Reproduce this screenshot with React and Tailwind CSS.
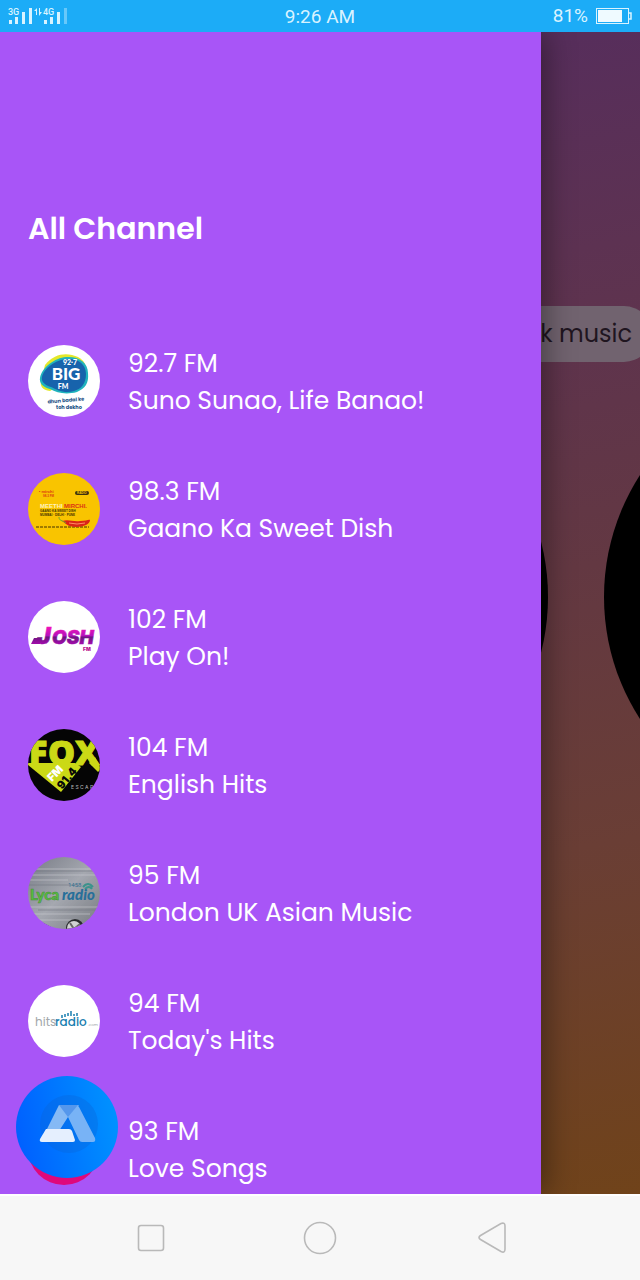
import React from "react";

const logoClass = "size-[72px] shrink-0 rounded-full";

function BigLogo() {
  return (
    <svg viewBox="0 0 72 72" className={logoClass} aria-hidden="true">
      <rect width="72" height="72" fill="#fff" />
      <path d="M17 20C25 10 35 8 44 10C53 12 58 17 58 24L22 46C14 45 12 41 13 36Z" fill="#e3e829" />
      <path d="M12 33C14 22 27 13 38 12C50 11 60 17 60 28C61 39 57 43 49 47C38 50 29 48 22 44C15 42 11 38 12 33Z" fill="#20b3bd" />
      <path d="M14 32C16 23 28 15 38 14C50 13 58 19 58 29C58 39 53 44 46 46C37 49 29 45 23 42C16 40 13 36 14 32Z" fill="#1763ac" />
      <g fill="#fff" fontFamily="Lato, sans-serif" fontWeight="900" textAnchor="middle">
        <text x="42" y="20" fontSize="7">92·7</text>
        <text x="38" y="35" fontSize="17">BIG</text>
        <text x="35" y="44" fontSize="7">FM</text>
      </g>
      <g fill="#184e84" fontFamily="Poppins, Lato, sans-serif" fontWeight="700" fontSize="5" textAnchor="middle">
        <text x="38" y="57" transform="rotate(-5 38 57)">dhun badal ke</text>
        <text x="41" y="64">toh dekho</text>
      </g>
    </svg>
  );
}

function MirchiLogo() {
  return (
    <svg viewBox="0 0 72 72" className={logoClass} aria-hidden="true">
      <rect width="72" height="72" fill="#f9c400" />
      <g fontFamily="'Liberation Sans', sans-serif" fontWeight="700">
        <text x="11" y="20" fontSize="4" fill="#dc3a12">▪ mirchi</text>
        <text x="15" y="24" fontSize="3" fill="#dc3a12">98.3 FM</text>
        <rect x="47" y="18" width="14" height="4" rx="2" fill="#3d3010" />
        <text x="49" y="21" fontSize="3" fill="#f9c400">RADIO</text>
        <text x="12" y="35" fontSize="6" fill="#fff2bd">MEETHI</text>
        <text x="36" y="35" fontSize="6" fill="#db3114">MIRCHI.</text>
        <text x="12" y="39" fontSize="3" fill="#443300">GAANO KA SWEET DISH</text>
        <text x="12" y="43" fontSize="3" fill="#443300">MUMBAI · DELHI · PUNE</text>
      </g>
      <path d="M8 54H61" stroke="#443300" strokeDasharray="3 1" />
      <path d="M34 48C41 46 45 49 52 48C58 48 61 46 62 47C62 51 56 54 48 54C40 54 37 50 34 48Z" fill="#d92418" />
      <path d="M31 44C31 48 34 47 38 50" fill="none" stroke="#71a82c" />
      <path d="M41 50Q49 52 57 50" fill="none" stroke="#ff8c63" />
    </svg>
  );
}

function JoshLogo() {
  return (
    <svg viewBox="0 0 72 72" className={logoClass} aria-hidden="true">
      <defs>
        <linearGradient id="josh" gradientUnits="userSpaceOnUse" x1="0" y1="26" x2="0" y2="44">
          <stop stopColor="#f112b8" />
          <stop offset="0.5" stopColor="#b212bc" />
          <stop offset="0.55" stopColor="#6c147f" />
          <stop offset="1" stopColor="#a90ab1" />
        </linearGradient>
      </defs>
      <rect width="72" height="72" fill="#fff" />
      <path d="M6 37H12L12 43H3Z" fill="url(#josh)" />
      <g fill="url(#josh)" stroke="url(#josh)" strokeWidth="0.5" fontFamily="Inter, sans-serif" fontWeight="900" fontStyle="italic">
        <text x="9" y="43" fontSize="23">J</text>
        <text x="24" y="43" fontSize="19">OSH</text>
      </g>
      <text x="55" y="50" fontFamily="Inter, sans-serif" fontSize="5" fontWeight="900" fill="#b8128f">FM</text>
    </svg>
  );
}

function FoxLogo() {
  return (
    <svg viewBox="0 0 72 72" className={logoClass} aria-hidden="true">
      <rect width="72" height="72" fill="#050505" />
      <path d="M0 36L33 63L53 38L47 34H0Z" fill="#cbd916" />
      <g fontFamily="'Open Sans', sans-serif" fontWeight="800" fontSize="34" fill="#cbd916" stroke="#cbd916" strokeWidth="1">
        <text x="1" y="36">F</text>
        <text x="20" y="36">O</text>
        <text x="47" y="36">X</text>
      </g>
      <path d="M61 34L67 28L73 40L70 43Z" fill="#cbd916" />
      <g fontFamily="Inter, sans-serif" fontWeight="900">
        <text x="24" y="53" fontSize="11" fill="#fff" transform="rotate(-46 24 53)">FM</text>
        <text x="34" y="61" fontSize="11" fill="#080808" transform="rotate(-50 34 61)">91.4</text>
      </g>
      <text x="43" y="60" fontSize="5" fill="#bbb" fontFamily="Inter, sans-serif">E S C A P E</text>
    </svg>
  );
}

function LycaLogo() {
  return (
    <svg viewBox="0 0 72 72" className={logoClass} aria-hidden="true">
      <defs>
        <linearGradient id="metal" x1="0" y1="0" x2="1" y2="1">
          <stop stopColor="#777b85" />
          <stop offset="0.5" stopColor="#a5a8b0" />
          <stop offset="1" stopColor="#777a80" />
        </linearGradient>
      </defs>
      <rect width="72" height="72" fill="url(#metal)" />
      <path d="M0 12H66M0 18H72M0 23H40M0 50H72M0 57H62M5 63H48" stroke="#c9cad0" strokeWidth="1" opacity="0.6" />
      <path d="M0 14H72M0 28H50M10 53H72" stroke="#737780" strokeWidth="1" opacity="0.6" />
      <text x="40" y="30" fontSize="6" fill="#327293" fontFamily="Roboto, sans-serif">1458</text>
      <path d="M55 30Q60 24 65 30M57 32Q61 28 64 32" fill="none" stroke="#3a938c" strokeWidth="2" />
      <g fontSize="15" fontWeight="900" fontFamily="Lato, sans-serif">
        <text x="2" y="43" fill="#58bd40" stroke="#438f36" strokeWidth="0.5">Lyca</text>
        <text x="34" y="43" fill="#276f9a" fontStyle="italic">radio</text>
      </g>
      <circle cx="47" cy="71" r="9" fill="#292b2d" />
      <circle cx="46" cy="71" r="7" fill="#d1d2d2" />
      <path d="M46 72L42 66M46 72L52 67" stroke="#676767" strokeWidth="2" />
      <path d="M10 63L23 70H18Z" fill="#2c3035" />
    </svg>
  );
}

function HitsLogo() {
  return (
    <svg viewBox="0 0 72 72" className={logoClass} aria-hidden="true">
      <rect width="72" height="72" fill="#fff" />
      <g fontFamily="Poppins, Lato, sans-serif">
        <text x="7" y="41" fontSize="12" fill="#a3a8aa">hits</text>
        <text x="27" y="41" fontSize="12" fontWeight="500" fill="#187eaf">radio</text>
        <text x="60" y="41" fontSize="4" fill="#9ba3a7">.com</text>
      </g>
      <path d="M34 33V30M37 32V29M40 31V28M43 31V26M46 31V29M49 31V28" stroke="#187eaf" strokeWidth="1.5" />
    </svg>
  );
}

function LoveLogo() {
  return (
    <svg viewBox="0 0 72 72" className={logoClass} aria-hidden="true">
      <rect width="72" height="72" fill="#df087b" />
    </svg>
  );
}

const channels = [
  { station: "92.7 FM", name: "Suno Sunao, Life Banao!", Logo: BigLogo },
  { station: "98.3 FM", name: "Gaano Ka Sweet Dish", Logo: MirchiLogo },
  { station: "102 FM", name: "Play On!", Logo: JoshLogo },
  { station: "104 FM", name: "English Hits", Logo: FoxLogo },
  { station: "95 FM", name: "London UK Asian Music", Logo: LycaLogo },
  { station: "94 FM", name: "Today's Hits", Logo: HitsLogo },
  { station: "93 FM", name: "Love Songs", Logo: LoveLogo },
];

function Signal({ weak }) {
  return (
    <svg viewBox="0 0 24 16" className="h-4 w-6" fill="#d9f3ff" aria-hidden="true">
      <rect x="1" y="12" width="3" height="4" />
      <rect x="7" y="9" width="3" height="7" />
      <rect x="14" y="4" width="3" height="12" />
      <rect x="21" y="0" width="3" height="16" opacity={weak ? 0.4 : 1} />
    </svg>
  );
}

function StatusBar() {
  return (
    <header className="grid h-8 shrink-0 grid-cols-3 items-center bg-[#1cacf7] px-2 font-['Roboto',sans-serif] text-[#d9f3ff]">
      <div className="flex items-end">
        <div className="relative">
          <Signal />
          <span className="absolute top-0 left-0 text-[9px] leading-[9px] font-medium">3G</span>
        </div>
        <svg viewBox="0 0 8 8" className="mr-px ml-0.5 size-2 self-start" fill="#d9f3ff" aria-hidden="true">
          <path d="M2 7V3H0L3 0V7ZM5 0H6V4H8L5 8Z" />
        </svg>
        <div className="relative">
          <Signal weak />
          <span className="absolute top-0 left-0 text-[9px] leading-[9px] font-medium">4G</span>
        </div>
      </div>
      <span className="pt-0.5 text-center text-[19px] leading-6 whitespace-nowrap">9:26 AM</span>
      <div className="flex items-center justify-end gap-2 text-[19px] leading-6">
        <span>81%</span>
        <svg viewBox="0 0 36 16" className="h-4 w-9" fill="none" stroke="#d9f3ff" aria-hidden="true">
          <rect x="0.5" y="0.5" width="32" height="15" />
          <rect x="2" y="2" width="24" height="12" fill="#effaff" stroke="none" />
          <path d="M33 5H35V11H33" strokeWidth="1.5" />
        </svg>
      </div>
    </header>
  );
}

function Player() {
  return (
    <div className="absolute inset-0 overflow-hidden bg-linear-[170deg,#542c60_0%,#5d3252_25%,#633842_50%,#6a3e35_72%,#70431a_100%]">
      <div className="-mr-3 flex justify-end pt-[274px]">
        <button type="button" className="h-14 rounded-full bg-[#71636f] px-5 text-[24px] leading-[54px] whitespace-nowrap text-[#20151f]">
          Rock music
        </button>
      </div>
      <div className="flex gap-14 pt-[10px] pl-[98px]">
        <div className="size-[450px] shrink-0 rounded-full bg-black" />
        <div className="size-[450px] shrink-0 rounded-full bg-black" />
      </div>
    </div>
  );
}

function Drawer() {
  return (
    <aside className="relative h-full w-[84.5%] overflow-y-auto bg-[#a855f7] text-white shadow-[4px_0_28px_rgba(0,0,0,0.4)] [scrollbar-width:none]">
      <h1 className="px-7 pt-[173px] pb-16 text-[30px] leading-12 font-semibold">All Channel</h1>
      <ul>
        {channels.map(({ station, name, Logo }) => (
          <li key={station}>
            <button type="button" className="flex h-32 w-full items-center gap-7 px-7 text-left text-[25px] leading-[37px]">
              <Logo />
              <span className="flex flex-col pt-0.5">
                <span>{station}</span>
                <span className="whitespace-nowrap">{name}</span>
              </span>
            </button>
          </li>
        ))}
      </ul>
    </aside>
  );
}

function FloatingButton() {
  return (
    <button type="button" aria-label="Assistant" className="absolute bottom-4 left-4 size-[102px] rounded-full">
      <svg viewBox="0 0 102 102" className="size-full" aria-hidden="true">
        <defs>
          <linearGradient id="assist" x1="0" y1="0.6" x2="1" y2="0.4">
            <stop stopColor="#0060ff" />
            <stop offset="1" stopColor="#0092ff" />
          </linearGradient>
        </defs>
        <circle cx="51" cy="51" r="51" fill="url(#assist)" />
        <circle cx="53" cy="48" r="29" fill="#0864d8" opacity="0.35" />
        <path d="M43 29H63L52 41L43 55H30Z" fill="#85b9f5" />
        <path d="M43 29H60Q62 29 63 31L79 62Q80 66 77 66H66Q64 66 63 64L52 41Z" fill="#78b3f6" />
        <path d="M43 29H62L52 41Z" fill="#5597ec" />
        <path d="M30 53H53Q55 53 56 55L59 64Q59 66 57 66H26Q23 66 24 63Z" fill="#e5effe" />
      </svg>
    </button>
  );
}

function NavigationBar() {
  const button = "flex size-12 items-center justify-center";
  return (
    <nav className="grid h-[86px] shrink-0 grid-cols-3 place-items-center border-t-2 border-white bg-[#f7f7f7] px-[66px]">
      <button type="button" aria-label="Recent apps" className={button}>
        <svg viewBox="0 0 34 34" className="size-[34px]" fill="none" stroke="#b9b9b9" strokeWidth="1.6" aria-hidden="true">
          <rect x="4.5" y="4.5" width="25" height="25" rx="2.5" />
        </svg>
      </button>
      <button type="button" aria-label="Home" className={button}>
        <svg viewBox="0 0 34 34" className="size-[34px]" fill="none" stroke="#b9b9b9" strokeWidth="1.6" aria-hidden="true">
          <circle cx="17" cy="17" r="15.5" />
        </svg>
      </button>
      <button type="button" aria-label="Back" className={button}>
        <svg viewBox="0 0 34 34" className="size-[34px]" fill="none" stroke="#b9b9b9" strokeWidth="1.6" aria-hidden="true">
          <path d="M8.5 14.5L29 2.5Q33 1 33 5V28Q33 32.5 29 30.5L8.5 18.5Q5.5 16.5 8.5 14.5Z" />
        </svg>
      </button>
    </nav>
  );
}

export default function App() {
  return (
    <div className="flex h-screen flex-col overflow-hidden font-['Poppins','Inter',sans-serif]">
      <StatusBar />
      <main className="relative min-h-0 flex-1 overflow-hidden">
        <Player />
        <Drawer />
        <FloatingButton />
      </main>
      <NavigationBar />
    </div>
  );
}
